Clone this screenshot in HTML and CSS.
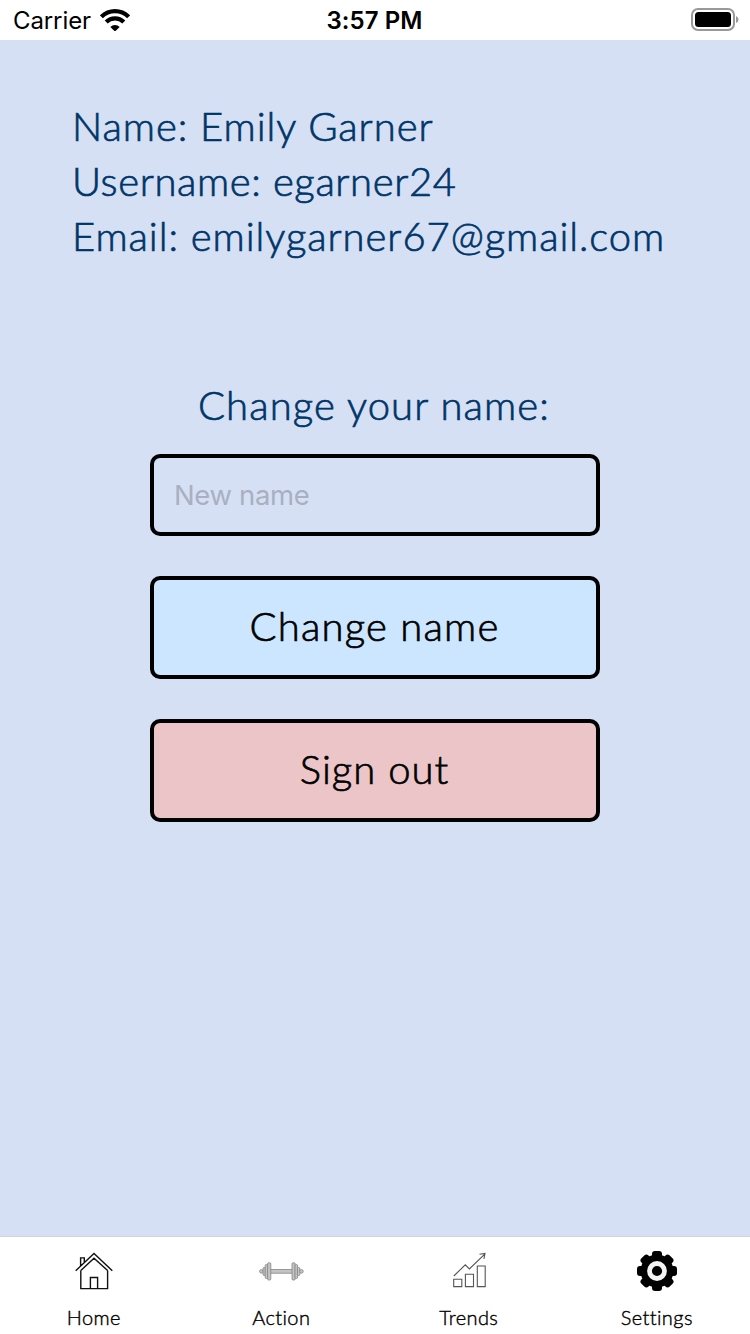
FILE: index.html
```html
<!DOCTYPE html>
<html lang="en">
<head>
<meta charset="utf-8">
<title>Settings</title>
<link rel="stylesheet" href="styles.css">
</head>
<body>
<div class="app">
  <header class="status">
    <div class="carrier"><span>Carrier</span>
      <svg class="wifi" width="30" height="22" viewBox="0 0 30 22">
        <g fill="none" stroke="#000" stroke-width="4.2">
          <path d="M1.4 7.8A19.3 19.3 0 0 1 28.6 7.8"/>
          <path d="M6.2 13A12.5 12.5 0 0 1 23.8 13"/>
        </g>
        <path d="M15 22.5L10.3 17.9A6.7 6.7 0 0 1 19.7 17.9Z"/>
      </svg>
    </div>
    <time class="clock">3:57 PM</time>
    <div class="power">
      <svg width="48" height="24" viewBox="0 0 48 24">
        <rect x="1" y="1" width="42" height="21" rx="6" fill="none" stroke="#999" stroke-width="2"/>
        <rect x="4" y="4" width="36" height="15" rx="3.5"/>
        <path d="M45 8Q47.5 9 47.5 11.5T45 15Z" fill="#999"/>
      </svg>
    </div>
  </header>
  <main class="content">
    <section class="profile">
      <div class="line line-name">Name: Emily Garner</div>
      <div class="line line-user">Username: egarner24</div>
      <div class="line line-email">Email: emilygarner67@gmail.com</div>
    </section>
    <form class="form">
      <label class="label" for="name">Change your name:</label>
      <input class="field" id="name" placeholder="New name">
      <button class="button change" type="button">Change name</button>
      <button class="button signout" type="button">Sign out</button>
    </form>
  </main>
  <nav class="tabs">
    <a class="tab">
      <svg class="icon" width="48" height="48" viewBox="0 0 48 48" fill="none" stroke="#111" stroke-width="1.4">
        <path d="M5.7 23.8L24 6.4L42.3 23.8M10.8 23.6V41.6H37.6V23.6M10.8 23.6L24 11.2L37.6 23.6M10.6 19V10.9H14.3V15.6M20.4 41.6V30.5H27.6V41.6"/>
      </svg>
      <span class="tab-label home">Home</span>
    </a>
    <a class="tab">
      <svg class="icon" width="48" height="48" viewBox="0 0 48 48" fill="#c4c4c4" stroke="#858585" stroke-width=".8">
        <rect x="12" y="22.6" width="24" height="3.6"/>
        <circle cx="4.4" cy="24.4" r="1.8"/>
        <rect x="6" y="20.5" width="2.4" height="8" rx="1"/>
        <rect x="8.2" y="17.6" width="2.6" height="13.8" rx="1"/>
        <rect x="10.6" y="15.8" width="3.2" height="17.2" rx="1"/>
        <rect x="35" y="15.8" width="3.2" height="17.2" rx="1"/>
        <rect x="38" y="17.6" width="2.6" height="13.8" rx="1"/>
        <rect x="40.4" y="20.5" width="2.4" height="8" rx="1"/>
        <circle cx="44.4" cy="24.4" r="1.8"/>
      </svg>
      <span class="tab-label action">Action</span>
    </a>
    <a class="tab">
      <svg class="icon" width="48" height="48" viewBox="0 0 48 48" fill="none" stroke="#555" stroke-width="1.1">
        <path d="M8.7 32.3H16.8V39.6H8.7ZM20.4 27.3H28.5V39.6H20.4ZM32.3 19H40.2V39.6H32.3ZM8.8 29L20.3 17.8L24.4 21.9L40 6.8M34.5 7.3L40 6.5L38.9 11.8"/>
      </svg>
      <span class="tab-label trends">Trends</span>
    </a>
    <a class="tab">
      <svg class="icon" width="48" height="48" viewBox="0 0 48 48">
        <g transform="translate(25 24)">
          <circle r="16.5"/>
          <g stroke="#000" stroke-width="6" stroke-linejoin="round">
            <path id="tooth" d="M-2-17H2V-12H-2Z"/>
            <use href="#tooth" transform="rotate(45)"/>
            <use href="#tooth" transform="rotate(90)"/>
            <use href="#tooth" transform="rotate(135)"/>
            <use href="#tooth" transform="rotate(180)"/>
            <use href="#tooth" transform="rotate(225)"/>
            <use href="#tooth" transform="rotate(270)"/>
            <use href="#tooth" transform="rotate(315)"/>
          </g>
          <circle r="7.5" fill="none" stroke="#f3f3f3" stroke-width="4.8"/>
        </g>
      </svg>
      <span class="tab-label settings">Settings</span>
    </a>
  </nav>
</div>
</body>
</html>
```
FILE: styles.css
```css
* { box-sizing: border-box; }
body { margin: 0; }
.app {
  width: 750px;
  height: 1334px;
  display: flex;
  flex-direction: column;
  background: #d6e0f4;
  font-family: Lato, sans-serif;
}
.status {
  height: 40px;
  flex: none;
  display: grid;
  grid-template-columns: 1fr auto 1fr;
  align-items: center;
  padding: 0 11px 0 13px;
  background: #fff;
  font: 24px/40px Inter, sans-serif;
}
.carrier { display: flex; align-items: center; gap: 9px; letter-spacing: -.1px; }
.carrier span, .clock { padding-top: 2px; line-height: 38px; }
.clock { padding-right: 3px; font-weight: 600; letter-spacing: .1px; }
.power { display: flex; justify-content: flex-end; }
.content { flex: 1; padding-top: 59px; }
.profile { padding-left: 72px; height: 279px; color: #003569; }
.line, .label, .button {
  font-family: Lato, sans-serif;
  font-size: 40px;
  font-weight: 300;
  line-height: 55px;
  white-space: nowrap;
  -webkit-text-stroke: .7px currentColor;
}
.line-name { letter-spacing: .95px; }
.line-user { letter-spacing: .6px; }
.line-email { letter-spacing: .93px; }
.form { width: 450px; margin: 0 auto; display: flex; flex-direction: column; }
.label {
  margin-bottom: 21px;
  padding-right: 2px;
  color: #003569;
  letter-spacing: 1.1px;
  text-align: center;
}
.field {
  height: 82px;
  margin: 0 0 40px;
  padding: 0 20px;
  border: 4px solid #000;
  border-radius: 10px;
  background: transparent;
  font: 27.5px Inter, sans-serif;
  letter-spacing: -.35px;
}
.field::placeholder { color: #a8b0c2; opacity: 1; }
.button {
  height: 103px;
  margin: 0 0 40px;
  padding: 0 1px 2px 0;
  border: 4px solid #000;
  border-radius: 10px;
  color: #000;
  letter-spacing: 1.2px;
}
.change { background: #cce6ff; }
.signout { background: #ebc5c7; letter-spacing: 1px; }
.tabs {
  flex: none;
  height: 98px;
  display: grid;
  grid-template-columns: repeat(4, 1fr);
  border-top: 1px solid #d2d5dc;
  background: #fff;
}
.tab { display: flex; flex-direction: column; align-items: center; padding-top: 10px; }
.icon { flex: none; }
.tab-label {
  margin-top: 9px;
  font-size: 20px;
  font-weight: 300;
  line-height: 27px;
  letter-spacing: .4px;
  -webkit-text-stroke: .4px currentColor;
}
.settings { padding-left: 1px; }
```
